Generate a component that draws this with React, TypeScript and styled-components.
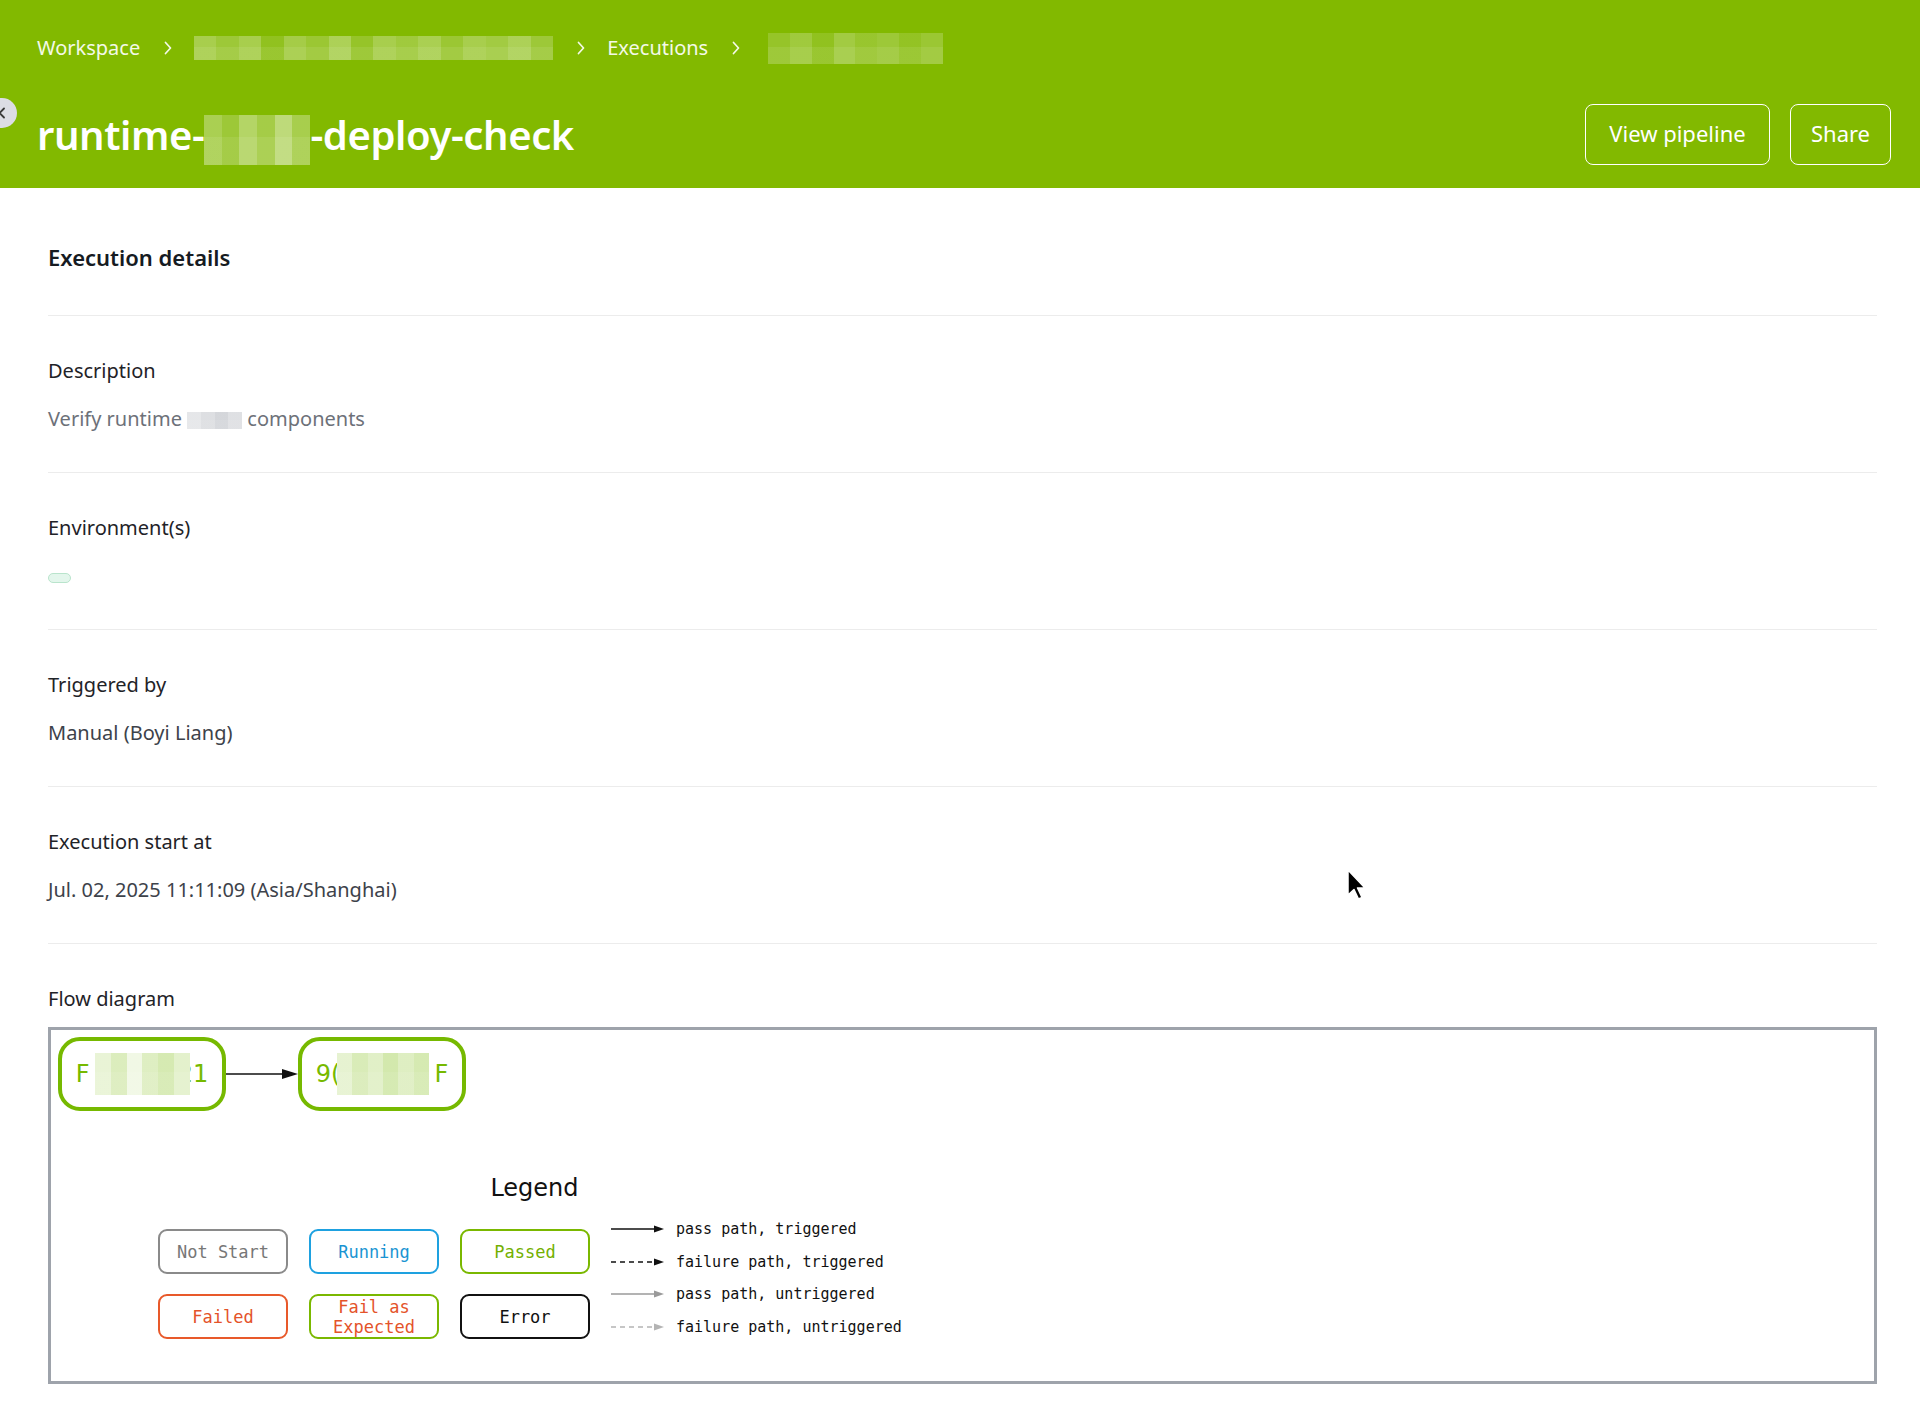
import React from "react";
import styled, { createGlobalStyle } from "styled-components";

const GlobalStyle = createGlobalStyle`
  html, body {
    margin: 0;
    padding: 0;
    background: #ffffff;
  }
  body {
    font-family: "Noto Sans", "Open Sans", sans-serif;
    color: #1f2328;
  }
  * {
    box-sizing: border-box;
  }
`;

const BRAND = "#82b900";
const NODE_GREEN = "#76b900";

const Page = styled.div`
  position: relative;
  width: 1920px;
  min-height: 1402px;
`;

/* ---------- header ---------- */

const Header = styled.header`
  position: relative;
  background: ${BRAND};
  padding: 32px 29px 23px 37px;
  color: #ffffff;
`;

const Crumbs = styled.nav`
  display: flex;
  align-items: center;
  height: 32px;
  font-size: 20px;
`;

const Crumb = styled.span`
  color: #f4f9e8;
  line-height: 32px;
`;

const CrumbSep = styled.svg<{ $after?: number }>`
  margin: 0 ${(p) => p.$after ?? 22}px 0 24px;
  flex-shrink: 0;
`;

const TitleRow = styled.div`
  display: flex;
  align-items: center;
  justify-content: space-between;
  margin-top: 40px;
  height: 61px;
`;

const Title = styled.h1`
  margin: 0;
  font-size: 40px;
  font-weight: 600;
  line-height: 61px;
  color: #ffffff;
  letter-spacing: -0.4px;
`;

const Actions = styled.div`
  display: flex;
  gap: 20px;
`;

const OutlineButton = styled.button<{ $w: number }>`
  height: 61px;
  padding: 0 0 3px;
  width: ${(p) => p.$w}px;
  border: 1.5px solid #ffffff;
  border-radius: 8px;
  background: transparent;
  color: #ffffff;
  font-family: inherit;
  font-size: 22px;
  cursor: pointer;
`;

const CollapseHandle = styled.span`
  position: absolute;
  left: -13px;
  top: 98px;
  width: 30px;
  height: 30px;
  border-radius: 50%;
  background: #dcdde4;
  display: flex;
  align-items: center;
  justify-content: center;
`;

/* redacted text is shown as a strip of pixel blocks */
const mosaicStops = (alphas: number[], rgb: string) => {
  const step = 100 / alphas.length;
  return alphas
    .map(
      (a, i) =>
        `rgba(${rgb},${a}) ${(i * step).toFixed(2)}% ${((i + 1) * step).toFixed(2)}%`
    )
    .join(", ");
};

const Mosaic = styled.span<{
  $w: number;
  $h: number;
  $rgb: string;
  $alphas: number[];
  $va?: number;
  $base?: string;
}>`
  position: relative;
  display: inline-block;
  flex-shrink: 0;
  width: ${(p) => p.$w}px;
  height: ${(p) => p.$h}px;
  vertical-align: ${(p) => p.$va ?? 0}px;
  background:
    linear-gradient(180deg, rgba(255, 255, 255, 0) 0 45%, rgba(255, 255, 255, 0.08) 45% 100%),
    linear-gradient(90deg, ${(p) => mosaicStops(p.$alphas, p.$rgb)})
    ${(p) => (p.$base ? `, ${p.$base}` : "")};
`;

/* ---------- details ---------- */

const Main = styled.main`
  padding: 0 43px 18px 48px;
`;

const Heading = styled.h2`
  margin: 0;
  padding: 55px 0 44px;
  font-size: 22px;
  font-weight: 600;
  line-height: 28px;
  color: #161b22;
`;

const Field = styled.section<{ $last?: boolean }>`
  border-top: 1px solid #ececec;
  padding: 42px 0 ${(p) => (p.$last ? 0 : 40)}px;
`;

const Label = styled.div`
  font-size: 20px;
  line-height: 26px;
  color: #1f2328;
`;

const Value = styled.div<{ $muted?: boolean }>`
  margin-top: 22px;
  font-size: 20px;
  line-height: 26px;
  color: ${(p) => (p.$muted ? "#6d7179" : "#3d424a")};
`;

const EnvChip = styled.span`
  display: inline-block;
  width: 23px;
  height: 10px;
  border-radius: 6px;
  background: #e3f6ec;
  border: 1px solid #b9e4cc;
  vertical-align: middle;
`;

/* ---------- flow diagram ---------- */

const FlowBox = styled.div`
  margin-top: 15px;
  height: 357px;
  border: 3px solid #9ea3ab;
  padding: 7px;
`;

const NodeRow = styled.div`
  display: flex;
  align-items: center;
`;

const StepNode = styled.div`
  width: 168px;
  height: 74px;
  border: 4px solid ${NODE_GREEN};
  border-radius: 22px;
  display: flex;
  align-items: center;
  justify-content: center;
  font-family: "DejaVu Sans", "Liberation Sans", sans-serif;
  font-size: 24px;
  color: ${NODE_GREEN};
  white-space: nowrap;
`;

const Legend = styled.div`
  width: 760px;
  margin: 62px 0 0 100px;
`;

const LegendTitle = styled.div`
  width: 743px;
  text-align: center;
  padding-left: 10px;
  font-family: "DejaVu Sans", "Liberation Sans", sans-serif;
  font-size: 24px;
  line-height: 30px;
  color: #111111;
`;

const LegendBody = styled.div`
  display: flex;
  align-items: flex-start;
  gap: 21px;
  margin-top: 26px;
`;

const StatusGrid = styled.div`
  display: grid;
  grid-template-columns: repeat(3, 130px);
  grid-auto-rows: 45px;
  column-gap: 21px;
  row-gap: 20px;
  flex-shrink: 0;
`;

const StatusBox = styled.div<{ $border: string; $text: string }>`
  border: 2px solid ${(p) => p.$border};
  border-radius: 9px;
  display: flex;
  align-items: center;
  justify-content: center;
  text-align: center;
  font-family: "DejaVu Sans Mono", "Liberation Mono", monospace;
  font-size: 17px;
  line-height: 20px;
  color: ${(p) => p.$text};
`;

const EdgeList = styled.div`
  margin-top: -16px;
  display: flex;
  flex-direction: column;
  flex-shrink: 0;
`;

const EdgeRow = styled.div`
  display: flex;
  align-items: center;
  gap: 11px;
  height: 32.5px;
`;

const EdgeText = styled.span`
  font-family: "DejaVu Sans Mono", "Liberation Mono", monospace;
  font-size: 15px;
  color: #111111;
  white-space: nowrap;
`;

const Cursor = styled.svg`
  position: absolute;
  left: 1346px;
  top: 868px;
  pointer-events: none;
`;

const Chevron = ({ after }: { after?: number }) => (
  <CrumbSep $after={after} width="8" height="14" viewBox="0 0 8 14">
    <polyline
      points="1.5,1.5 6.5,7 1.5,12.5"
      fill="none"
      stroke="#f4f9e8"
      strokeWidth="1.7"
      strokeLinecap="round"
      strokeLinejoin="round"
    />
  </CrumbSep>
);

const EdgeSample = ({ color, dashed }: { color: string; dashed?: boolean }) => (
  <svg width="54" height="10" viewBox="0 0 54 10">
    <line
      x1="0"
      y1="5"
      x2="44"
      y2="5"
      stroke={color}
      strokeWidth="1.3"
      strokeDasharray={dashed ? "5 4" : undefined}
    />
    <polygon points="43,1.5 53,5 43,8.5" fill={color} />
  </svg>
);

const statuses = [
  { label: "Not Start", border: "#8a8a8a", text: "#777777" },
  { label: "Running", border: "#1ea1e0", text: "#1a94d2" },
  { label: "Passed", border: "#7ab800", text: "#74b000" },
  { label: "Failed", border: "#e8592a", text: "#e4532a" },
  { label: "Fail as\nExpected", border: "#7ab800", text: "#e4532a" },
  { label: "Error", border: "#111111", text: "#111111" },
];

const edges = [
  { text: "pass path, triggered", color: "#111111", dashed: false },
  { text: "failure path, triggered", color: "#111111", dashed: true },
  { text: "pass path, untriggered", color: "#9a9a9a", dashed: false },
  { text: "failure path, untriggered", color: "#b4b4b4", dashed: true },
];

const WHITE = "255,255,255";
const PALE_GREEN = "118,185,0";
const GREY = "170,174,182";

export default function App() {
  return (
    <Page>
      <GlobalStyle />
      <Header>
        <CollapseHandle>
          <svg width="10" height="12" viewBox="0 0 10 12">
            <polyline
              points="7,1.5 2.5,6 7,10.5"
              fill="none"
              stroke="#3a3a3a"
              strokeWidth="1.8"
              strokeLinecap="round"
            />
          </svg>
        </CollapseHandle>
        <Crumbs>
          <Crumb>Workspace</Crumb>
          <Chevron />
          <Mosaic
            $w={359}
            $h={24}
            $rgb={WHITE}
            $alphas={[0.3, 0.22, 0.3, 0.12, 0.28, 0.2, 0.34, 0.16, 0.3, 0.24, 0.32, 0.2, 0.3, 0.26, 0.34, 0.22]}
          />
          <Chevron />
          <Crumb>Executions</Crumb>
          <Chevron after={28} />
          <Mosaic
            $w={175}
            $h={31}
            $rgb={WHITE}
            $alphas={[0.16, 0.24, 0.12, 0.26, 0.18, 0.22, 0.14, 0.2]}
          />
        </Crumbs>
        <TitleRow>
          <Title>
            runtime-
            <Mosaic
              $w={106}
              $h={50}
              $rgb={WHITE}
              $alphas={[0.32, 0.22, 0.4, 0.28, 0.48, 0.3]}
              $va={-15}
            />
            -deploy-check
          </Title>
          <Actions>
            <OutlineButton $w={185}>View pipeline</OutlineButton>
            <OutlineButton $w={101}>Share</OutlineButton>
          </Actions>
        </TitleRow>
      </Header>

      <Main>
        <Heading>Execution details</Heading>

        <Field>
          <Label>Description</Label>
          <Value $muted>
            Verify runtime{" "}
            <Mosaic
              $w={55}
              $h={17}
              $rgb={GREY}
              $alphas={[0.3, 0.4, 0.5, 0.38]}
              $va={-3}
            />{" "}
            components
          </Value>
        </Field>

        <Field>
          <Label>Environment(s)</Label>
          <Value>
            <EnvChip />
          </Value>
        </Field>

        <Field>
          <Label>Triggered by</Label>
          <Value>Manual (Boyi Liang)</Value>
        </Field>

        <Field>
          <Label>Execution start at</Label>
          <Value>Jul. 02, 2025 11:11:09 (Asia/Shanghai)</Value>
        </Field>

        <Field $last>
          <Label>Flow diagram</Label>
          <FlowBox>
            <NodeRow>
              <StepNode>
                F
                <Mosaic
                  $w={95}
                  $h={42}
                  $rgb={PALE_GREEN}
                  $alphas={[0.16, 0.26, 0.1, 0.24, 0.3, 0.2]}
                  $va={-12}
                  $base="#ffffff"
                  style={{ marginLeft: 5, marginRight: -12 }}
                />
                <span>21</span>
              </StepNode>
              <svg width="72" height="14" viewBox="0 0 72 14">
                <line x1="0" y1="7" x2="58" y2="7" stroke="#111" strokeWidth="1.6" />
                <polygon points="56,2 72,7 56,12" fill="#111" />
              </svg>
              <StepNode>
                9(
                <Mosaic
                  $w={92}
                  $h={42}
                  $rgb={PALE_GREEN}
                  $alphas={[0.18, 0.28, 0.22, 0.32, 0.24, 0.3]}
                  $va={-12}
                  $base="#ffffff"
                  style={{ marginLeft: -3, marginRight: 5 }}
                />
                F
              </StepNode>
            </NodeRow>

            <Legend>
              <LegendTitle>Legend</LegendTitle>
              <LegendBody>
                <StatusGrid>
                  {statuses.map((s) => (
                    <StatusBox key={s.label} $border={s.border} $text={s.text}>
                      {s.label.split("\n").map((line, i) => (
                        <React.Fragment key={line}>
                          {i > 0 && <br />}
                          {line}
                        </React.Fragment>
                      ))}
                    </StatusBox>
                  ))}
                </StatusGrid>
                <EdgeList>
                  {edges.map((e) => (
                    <EdgeRow key={e.text}>
                      <EdgeSample color={e.color} dashed={e.dashed} />
                      <EdgeText>{e.text}</EdgeText>
                    </EdgeRow>
                  ))}
                </EdgeList>
              </LegendBody>
            </Legend>
          </FlowBox>
        </Field>
      </Main>

      <Cursor width="22" height="34" viewBox="0 0 22 34">
        <path
          d="M2 2 L2 27 L8 21.5 L12.5 31 L16 29.5 L11.5 20 L19 20 Z"
          fill="#000"
          stroke="#fff"
          strokeWidth="1.5"
          strokeLinejoin="round"
        />
      </Cursor>
    </Page>
  );
}
